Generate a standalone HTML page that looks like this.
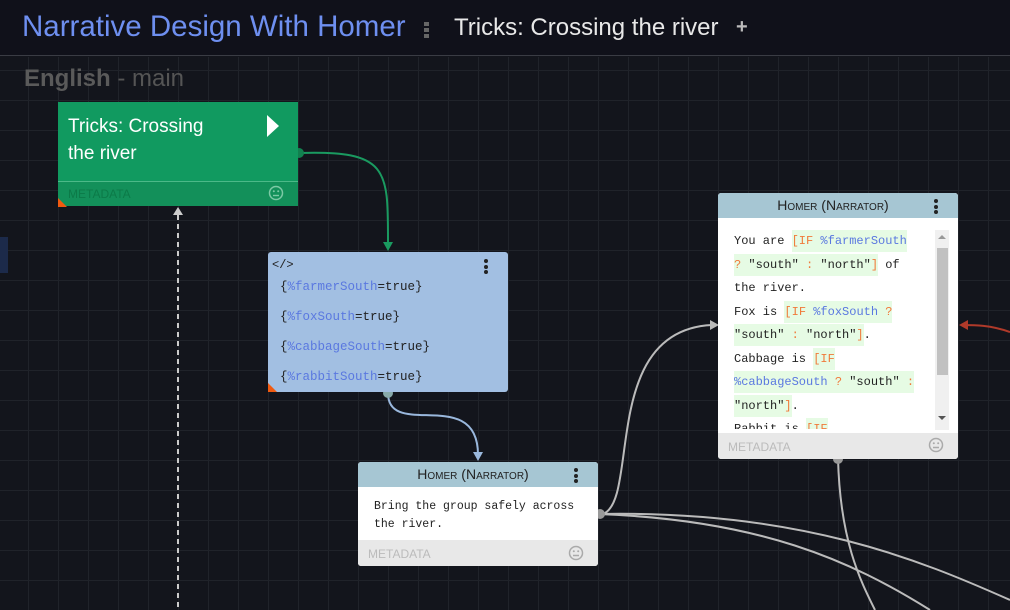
<!DOCTYPE html>
<html><head><meta charset="utf-8"><style>
*{margin:0;padding:0;box-sizing:border-box}
body{width:1010px;height:610px;overflow:hidden;background:#13151c;font-family:"Liberation Sans",sans-serif;position:relative}
.grid{position:absolute;left:0;top:57px;width:1010px;height:553px;
background-image:linear-gradient(to right,#20232a 1px,transparent 1px),linear-gradient(to bottom,#20232a 1px,transparent 1px);
background-size:30px 30px;background-position:28px 13px}
.hdr{position:absolute;left:0;top:0;width:1010px;height:56px;background:#10111a;border-bottom:1px solid #3a3c44}
.t1{position:absolute;left:22px;top:10px;color:#6e8ff0;font-size:29.5px}
.dots{position:absolute;left:424px;top:22px;width:5px}
.dots i{display:block;width:5px;height:4px;background:#666;margin-bottom:2px}
.t2{position:absolute;left:454px;top:14px;color:#e8e8e8;font-size:24px}
.plus{position:absolute;left:736px;top:16px;color:#bbb;font-size:20px;font-weight:bold}
.lang{position:absolute;left:24px;top:65px;font-size:24px;color:#555}
.lang b{color:#5a5a5a}
.mono{font-family:"Liberation Mono","DejaVu Sans Mono",monospace}
.node{position:absolute}
.kd{position:absolute;width:4px}
.kd i{display:block;width:4px;height:4px;background:#222;border-radius:2px;margin-bottom:1.5px}
.meta{font-size:12px;color:#bbb}
.hl{background:#e6fbe4;padding:4px 0}
.o{color:#f07a3a}.b{color:#5a78e0}
</style></head><body>
<div class="grid"></div>
<div style="position:absolute;left:0;top:237px;width:8px;height:36px;background:#1c2a4a"></div>
<div class="hdr">
 <div class="t1">Narrative Design With Homer</div>
 <div class="dots"><i></i><i></i><i></i></div>
 <div class="t2">Tricks: Crossing the river</div>
 <div class="plus">+</div>
</div>
<div class="lang"><b>English</b> - main</div>

<svg width="0" height="0" style="position:absolute"><defs>
<symbol id="sm" viewBox="0 0 16 16"><circle cx="8" cy="8" r="6.5" fill="none" stroke="currentColor" stroke-width="1.5"/><circle cx="5.8" cy="6.3" r="1" fill="currentColor"/><circle cx="10.2" cy="6.3" r="1" fill="currentColor"/><path d="M5 10.5H11" stroke="currentColor" stroke-width="1.4"/></symbol></defs></svg>

<svg style="position:absolute;left:0;top:0" width="1010" height="610">
 <path d="M299 153 C 390 150 388 170 388 245" stroke="#1a9a60" stroke-width="2" fill="none"/>
 <polygon points="383,242 393,242 388,251" fill="#1a9a60"/>
 <circle cx="299" cy="153" r="5" fill="#12804f"/>
 <path d="M178 215 L178 610" stroke="#ccc" stroke-width="2" stroke-dasharray="5,4" fill="none"/>
 <polygon points="173,215 183,215 178,207" fill="#ccc"/>
 <path d="M388 393 C 388 440 478 385 478 455" stroke="#9ab8dd" stroke-width="2" fill="none"/>
 <polygon points="473,452 483,452 478,461" fill="#9ab8dd"/>
 <circle cx="388" cy="393" r="5" fill="#8aa"/>
 <path d="M603 514 C 640 500 600 330 712 325" stroke="#bbb" stroke-width="2" fill="none"/>
 <polygon points="710,320 719,325 710,330" fill="#bbb"/>
 <path d="M598 514 C 800 510 920 560 1010 600" stroke="#bbb" stroke-width="2" fill="none"/>
 <path d="M598 514 C 760 520 850 560 930 610" stroke="#bbb" stroke-width="2" fill="none"/>
 <path d="M838 458 C 840 540 860 580 875 610" stroke="#bbb" stroke-width="2" fill="none"/>
 <circle cx="838" cy="459" r="5" fill="#999"/>
 <circle cx="600" cy="514" r="5" fill="#999"/>
 <path d="M1010 332 C 990 325 975 325 962 325" stroke="#b03a2a" stroke-width="2" fill="none"/>
 <polygon points="968,320 959,325 968,330" fill="#b03a2a"/>
</svg>

<div class="node" style="left:58px;top:102px;width:240px;height:104px;background:#119a60">
 <div style="position:absolute;left:10px;top:11px;color:#fff;font-size:19px;line-height:27px">Tricks: Crossing<br>the river</div>
 <svg style="position:absolute;left:207px;top:12px" width="16" height="24"><polygon points="2,1 14,12 2,23" fill="#fff"/></svg>
 <div style="position:absolute;left:0;top:79px;width:240px;height:25px;background:#13905a;border-top:1px solid #4cb988"></div>
 <div class="meta" style="position:absolute;left:10px;top:85px;color:#0c7a48">METADATA</div>
 <svg style="position:absolute;left:210px;top:83px;color:#7cc9a5" width="16" height="16"><use href="#sm"/></svg>
 <div style="position:absolute;left:0;top:96px;width:0;height:0;border-bottom:9px solid #f05a10;border-right:9px solid transparent"></div>
</div>

<div class="node" style="left:268px;top:252px;width:240px;height:140px;background:#a2bfe2;border-radius:3px">
 <div style="position:absolute;left:4px;top:6px;font-size:12px;color:#222" class="mono">&lt;/&gt;</div>
 <div class="kd" style="left:216px;top:7px"><i></i><i></i><i></i></div>
 <div class="mono" style="position:absolute;left:12px;top:20px;font-size:12.5px;line-height:30px;color:#222">
  {<span class="b">%farmerSouth</span>=true}<br>{<span class="b">%foxSouth</span>=true}<br>{<span class="b">%cabbageSouth</span>=true}<br>{<span class="b">%rabbitSouth</span>=true}</div>
 <div style="position:absolute;left:0;top:131px;border-bottom:9px solid #f05a10;border-right:9px solid transparent"></div>
</div>

<div class="node" style="left:358px;top:462px;width:240px;height:104px;background:#fff;border-radius:3px;overflow:hidden">
 <div style="height:25px;background:#a6c6d3;text-align:center;font-size:14px;line-height:25px;color:#222;padding-right:10px;font-variant:small-caps">Homer (Narrator)</div>
 <div class="kd" style="left:216px;top:6px"><i></i><i></i><i></i></div>
 <div class="mono" style="position:absolute;left:16px;top:36px;font-size:11.5px;line-height:18px;color:#222">Bring the group safely across<br>the river.</div>
 <div style="position:absolute;left:0;top:78px;width:240px;height:26px;background:#e8e8e8"></div>
 <div class="meta" style="position:absolute;left:10px;top:85px">METADATA</div>
 <svg style="position:absolute;left:210px;top:83px;color:#aaa" width="16" height="16"><use href="#sm"/></svg>
</div>

<div class="node" style="left:718px;top:193px;width:240px;height:266px;background:#fff;border-radius:3px;overflow:hidden">
 <div style="height:25px;background:#a6c6d3;text-align:center;font-size:14px;line-height:25px;color:#222;padding-right:10px;font-variant:small-caps">Homer (Narrator)</div>
 <div class="kd" style="left:216px;top:6px"><i></i><i></i><i></i></div>
 <div class="mono" style="position:absolute;left:16px;top:37px;width:200px;font-size:12px;line-height:23.5px;color:#222;height:199px;overflow:hidden">
  You are <span class="hl"><span class="o">[IF</span> <span class="b">%farmerSouth</span><br><span class="o">?</span> "south" <span class="o">:</span> "north"<span class="o">]</span></span> of<br>the river.<br>Fox is <span class="hl"><span class="o">[IF</span> <span class="b">%foxSouth</span> <span class="o">?</span><br>"south" <span class="o">:</span> "north"<span class="o">]</span></span>.<br>Cabbage is <span class="hl"><span class="o">[IF</span><br><span class="b">%cabbageSouth</span> <span class="o">?</span> "south" <span class="o">:</span><br>"north"<span class="o">]</span></span>.<br>Rabbit is <span class="hl"><span class="o">[IF</span></span></div>
 <div style="position:absolute;left:217px;top:37px;width:14px;height:200px;background:#f0f0f0"></div>
 <div style="position:absolute;left:219px;top:55px;width:11px;height:127px;background:#c1c1c1"></div>
 <div style="position:absolute;left:220px;top:42px;border-left:4px solid transparent;border-right:4px solid transparent;border-bottom:4px solid #999"></div>
 <div style="position:absolute;left:220px;top:223px;border-left:4px solid transparent;border-right:4px solid transparent;border-top:4px solid #555"></div>
 <div style="position:absolute;left:0;top:240px;width:240px;height:26px;background:#e8e8e8"></div>
 <div class="meta" style="position:absolute;left:10px;top:247px">METADATA</div>
 <svg style="position:absolute;left:210px;top:244px;color:#aaa" width="16" height="16"><use href="#sm"/></svg>
</div>
</body></html>
